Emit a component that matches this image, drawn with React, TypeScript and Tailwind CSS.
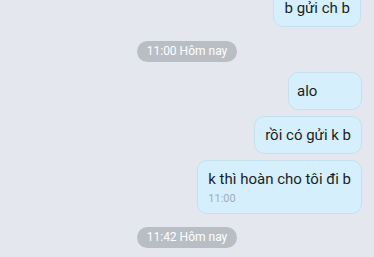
import React from "react";

const font = { fontFamily: "Roboto, 'Noto Sans', sans-serif" };

function Bubble({ text, time, pl = 10 }: { text: string; time?: string; pl?: number }) {
  return (
    <div
      className="min-w-[74px] rounded-[10px] border border-[#c6e0ee] bg-[#d5effc] pr-[10px] py-[8px]"
      style={{ paddingLeft: pl }}
    >
      <div className="text-[15px] leading-[20px] text-[#1b1f24]">{text}</div>
      {time && <div className="mt-[3px] text-[11px] leading-[13px] text-[#a4adb6]">{time}</div>}
    </div>
  );
}

function Pill({ text }: { text: string }) {
  return (
    <div className="flex justify-center">
      <div className="h-[21px] rounded-full bg-[#b9bec5] px-[10px] text-[12px] leading-[21px] text-white">{text}</div>
    </div>
  );
}

export default function App() {
  return (
    <div className="h-[257px] w-[374px] overflow-hidden bg-[#e4e8ee]" style={font}>
      <div className="flex flex-col mt-[-11px]">
        <div className="flex justify-end pr-[13px]">
          <Bubble text="b gửi ch b" pl={11} />
        </div>
        <div className="mt-[14px]">
          <Pill text="11:00 Hôm nay" />
        </div>
        <div className="mt-[10px] flex flex-col items-end gap-[6px] pr-[12px]">
          <Bubble text="alo" pl={8} />
          <Bubble text="rồi có gửi k b" />
          <Bubble text="k thì hoàn cho tôi đi b" time="11:00" />
        </div>
        <div className="mt-[13px]">
          <Pill text="11:42 Hôm nay" />
        </div>
      </div>
    </div>
  );
}
